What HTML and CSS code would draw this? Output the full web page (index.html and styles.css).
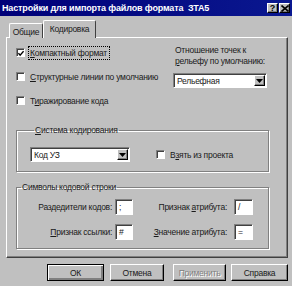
FILE: index.html
```html
<!DOCTYPE html>
<html lang="ru">
<head>
<meta charset="utf-8">
<link rel="stylesheet" href="styles.css">
</head>
<body>
<div class="window">
  <div class="titlebar">
    <span class="title">Настройки для импорта файлов формата&nbsp; ЗТА5</span>
    <div class="tbtns">
      <span class="tbtn">?</span>
      <span class="tbtn">
        <svg width="8" height="7" viewBox="0 0 8 7"><path d="M0.5 0.5 L7.5 6.5 M7.5 0.5 L0.5 6.5" stroke="#000" stroke-width="1.6"/></svg>
      </span>
    </div>
  </div>
  <div class="tabs">
    <div class="tab">Общие</div>
    <div class="tab active">Кодировка</div>
  </div>
  <div class="panel">
    <div class="top">
      <div class="checks">
        <div class="chk">
          <span class="box"><svg width="7" height="7" viewBox="0 0 7 7"><path d="M0.5 3 L2.5 5.5 L6.5 0.8" fill="none" stroke="#000" stroke-width="1.6"/></svg></span>
          <span class="focus"><u>К</u>омпактный формат</span>
        </div>
        <div class="chk">
          <span class="box"></span>
          <span><u>С</u>труктурные линии по умолчанию</span>
        </div>
        <div class="chk">
          <span class="box"></span>
          <span>Т<u>и</u>ражирование кода</span>
        </div>
      </div>
      <div class="relief">
        <div class="rl-label">Отношение точек к<br><u>р</u>ельефу по умолчанию:</div>
        <div class="combo relief-combo">
          <span class="val">Рельефная</span>
          <span class="drop"><svg width="7" height="4" viewBox="0 0 7 4"><path d="M0 0 H7 L3.5 4 Z" fill="#000"/></svg></span>
        </div>
      </div>
    </div>
    <fieldset class="group g1">
      <legend><u>С</u>истема кодирования</legend>
      <div class="g1-row">
        <div class="combo code-combo">
          <span class="val">Код УЗ</span>
          <span class="drop"><svg width="7" height="4" viewBox="0 0 7 4"><path d="M0 0 H7 L3.5 4 Z" fill="#000"/></svg></span>
        </div>
        <div class="chk proj">
          <span class="box"></span>
          <span>В<u>з</u>ять из проекта</span>
        </div>
      </div>
    </fieldset>
    <fieldset class="group g2">
      <legend>Символы кодовой строки</legend>
      <div class="fields">
        <span class="lbl l1">Разде<u>д</u>ители кодов:</span>
        <span class="inp">;</span>
        <span class="lbl l2">Признак <u>а</u>трибута:</span>
        <span class="inp">/</span>
        <span class="lbl l1"><u>П</u>ризнак ссылки:</span>
        <span class="inp">#</span>
        <span class="lbl l2"><u>З</u>начение атрибута:</span>
        <span class="inp">=</span>
      </div>
    </fieldset>
  </div>
  <div class="buttons">
    <span class="btn default">ОК</span>
    <span class="btn cancel">Отмена</span>
    <span class="btn disabled">Применить</span>
    <span class="btn help">Справка</span>
  </div>
</div>
</body>
</html>
```

FILE: styles.css
```css
* { box-sizing: border-box; }
html, body { margin: 0; padding: 0; }
body {
  width: 292px;
  height: 286px;
  overflow: hidden;
  background: #c0c0c0;
  font-family: "Liberation Sans", Arial, sans-serif;
  font-size: 8.5px;
  letter-spacing: -0.25px;
  color: #1a1a1a;
}
u { text-decoration: underline; text-underline-offset: 1px; }

.window {
  width: 292px;
  height: 286px;
  background: #c0c0c0;
}

.titlebar {
  height: 16px;
  background: linear-gradient(90deg, #000078, #0a1890);
  display: flex;
  align-items: center;
  justify-content: space-between;
  padding: 0 2px 0 2px;
}
.title {
  color: #fff;
  font-weight: bold;
  font-size: 9px;
  letter-spacing: -0.15px;
  white-space: nowrap;
}
.tbtns { display: flex; gap: 1px; }
.tbtn {
  width: 11px;
  height: 10px;
  background: #c0c0c0;
  border: 1px solid;
  border-color: #fff #000 #000 #fff;
  box-shadow: inset -1px -1px 0 #808080;
  display: flex;
  align-items: center;
  justify-content: center;
  font-weight: bold;
  font-size: 9px;
  letter-spacing: 0;
  line-height: 8px;
  color: #000;
}

.tabs {
  margin-top: 4px;
  height: 18px;
  padding-left: 9px;
  display: flex;
  align-items: flex-end;
  position: relative;
  z-index: 2;
}
.tab {
  height: 15px;
  width: 34px;
  border: 1px solid;
  border-color: #fff #404040 transparent #fff;
  border-bottom: none;
  border-radius: 2px 2px 0 0;
  display: flex;
  align-items: center;
  justify-content: center;
  padding-top: 1px;
  background: #c0c0c0;
}
.tab.active {
  height: 18px;
  width: 53px;
  padding-bottom: 2px;
}

.panel {
  margin: -1px 4px 0 6px;
  height: 221px;
  border: 1px solid;
  border-color: #fff #404040 #404040 #fff;
  box-shadow: inset -1px -1px 0 #808080;
  padding: 8px 18px 0 9px;
  position: relative;
  z-index: 1;
}

.top {
  display: flex;
  justify-content: space-between;
  height: 61px;
}
.checks {
  display: flex;
  flex-direction: column;
  gap: 11px;
}
.chk {
  display: flex;
  align-items: center;
  height: 13px;
  white-space: nowrap;
}
.box {
  width: 9px;
  height: 9px;
  background: #fff;
  border: 1px solid;
  border-color: #808080 #fff #fff #808080;
  box-shadow: inset 1px 1px 0 #404040;
  margin-right: 5px;
  display: flex;
  align-items: center;
  justify-content: center;
  padding: 1px 0 0 1px;
}
.focus {
  outline: 1px dotted #000;
  outline-offset: 1px;
  padding-right: 1px;
}

.relief {
  width: 94px;
  margin-top: -1px;
  margin-right: 2px;
}
.rl-label {
  line-height: 11px;
  white-space: nowrap;
  padding-left: 2px;
}
.combo {
  height: 15px;
  background: #fff;
  border: 1px solid;
  border-color: #808080 #fff #fff #808080;
  box-shadow: inset 1px 1px 0 #404040;
  display: flex;
  align-items: center;
  justify-content: space-between;
  padding: 1px 1px 1px 3px;
}
.relief-combo { margin-top: 6px; width: 94px; }
.code-combo { width: 100px; }
.drop {
  width: 11px;
  height: 11px;
  background: #c0c0c0;
  border: 1px solid;
  border-color: #fff #000 #000 #fff;
  box-shadow: inset -1px -1px 0 #808080;
  display: flex;
  align-items: center;
  justify-content: center;
}

.group {
  margin: 0;
  min-width: 0;
  border: 1px solid #808080;
  box-shadow: inset 1px 1px 0 #fff, 1px 1px 0 #fff;
}
.group legend {
  padding: 0 1px;
  margin-left: 4px;
  line-height: 12px;
  height: 12px;
  white-space: nowrap;
}
.g1 {
  margin-top: 17px;
  padding: 11px 0 9px 13px;
}
.g1-row {
  display: flex;
  align-items: center;
}
.proj { margin-left: 26px; }

.g2 {
  margin-top: 9px;
  padding: 6px 0 8px 0;
}
.fields {
  display: grid;
  grid-template-columns: 98px 18px 101px 19px;
  grid-auto-rows: 16px;
  row-gap: 9px;
  align-items: center;
}
.lbl {
  text-align: right;
  white-space: nowrap;
}
.l1 { padding-right: 3px; }
.l2 { padding-right: 7px; }
.inp {
  height: 16px;
  background: #fff;
  border: 1px solid;
  border-color: #808080 #fff #fff #808080;
  box-shadow: inset 1px 1px 0 #404040;
  padding: 1px 0 0 3px;
  line-height: 12px;
}

.buttons {
  display: flex;
  justify-content: flex-end;
  gap: 6px;
  padding-right: 4px;
  margin-top: 6px;
}
.btn {
  height: 17px;
  width: 55px;
  background: #c0c0c0;
  border: 1px solid;
  border-color: #fff #000 #000 #fff;
  box-shadow: inset -1px -1px 0 #808080;
  display: flex;
  align-items: center;
  justify-content: center;
}
.btn.default {
  width: 57px;
  border: 1px solid #000;
  box-shadow: inset 1px 1px 0 #fff, inset -2px -2px 0 #808080;
}
.btn.cancel { width: 54px; }
.btn.disabled {
  width: 53px;
  margin-left: 3px;
  color: #808080;
  text-shadow: 1px 1px 0 #fff;
}
.btn.help { width: 57px; margin-left: -1px; }
```
